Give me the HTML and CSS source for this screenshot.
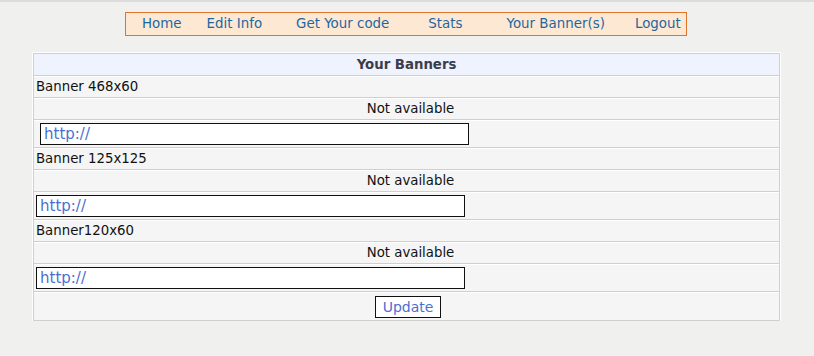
FILE: index.html
```html
<!DOCTYPE html>
<html lang="en">
<head>
    <meta charset="UTF-8">
    <title>Your Banners</title>
    <link rel="stylesheet" href="styles.css">
</head>
<body>
    <div class="top-bar"></div>

    <!-- Member menu -->
    <div class="menu">
        <a href="#" class="m-home">Home</a>
        <a href="#" class="m-edit">Edit Info</a>
        <a href="#" class="m-code">Get Your code</a>
        <a href="#" class="m-stats">Stats</a>
        <a href="#" class="m-banners">Your Banner(s)</a>
        <a href="#" class="m-logout">Logout</a>
    </div>

    <form>
        <table class="banners">
            <tr><th>Your Banners</th></tr>
            <tr><td>Banner 468x60</td></tr>
            <tr><td class="center">Not available</td></tr>
            <tr class="input-row"><td><input type="text" class="url url-first" value="http://"></td></tr>
            <tr><td>Banner 125x125</td></tr>
            <tr><td class="center">Not available</td></tr>
            <tr class="input-row"><td><input type="text" class="url" value="http://"></td></tr>
            <tr><td>Banner120x60</td></tr>
            <tr><td class="center">Not available</td></tr>
            <tr class="input-row"><td><input type="text" class="url" value="http://"></td></tr>
            <tr class="input-row"><td class="center"><button type="button" class="update">Update</button></td></tr>
        </table>
    </form>
</body>
</html>
```

FILE: styles.css
```css
* {
    box-sizing: border-box;
}

body {
    margin: 0;
    background: #f0f0ee;
    font-family: Verdana, "DejaVu Sans", sans-serif;
    font-size: 13.3px;
    color: #111;
}

.top-bar {
    height: 2px;
    background: #dcdcdc;
}

/* Menu */
.menu {
    width: 562px;
    height: 24px;
    margin: 10px 0 0 125px;
    background: #fde8d4;
    border: 1px solid #e0742c;
    display: flex;
    align-items: center;
}

.menu a {
    color: #1d67a0;
    text-decoration: none;
    white-space: nowrap;
    line-height: 22px;
    font-size: 13.4px;
}

.m-home { margin-left: 16px; }
.m-edit { margin-left: 25px; }
.m-code { margin-left: 34px; }
.m-stats { margin-left: 39px; }
.m-banners { margin-left: 44px; }
.m-logout { margin-left: 30px; }

/* Banner table */
.banners {
    width: 747px;
    margin: 17px 0 0 33px;
    border-collapse: separate;
    border-spacing: 0;
    border: 1px solid #cfcfcf;
    box-shadow: 0 0 0 1px #fff;
}

.banners th,
.banners td {
    height: 22px;
    padding: 0 2px;
    background: #f5f5f5;
    border-top: 1px solid #fff;
    border-bottom: 1px solid #cfcfcf;
    text-align: left;
    line-height: 18px;
}

.banners th {
    height: 22px;
    background: #eef3fd;
    border-top: none;
    text-align: center;
    color: #3c3c4c;
}

.banners tr:last-child td {
    border-bottom: none;
}

.banners .center {
    text-align: center;
    padding-left: 10px;
}

.banners .input-row td {
    height: 28px;
}

.url {
    display: block;
    width: 429px;
    height: 22px;
    margin: 0;
    padding: 0 3px;
    border: 1px solid #111;
    background: #fff;
    font-family: Verdana, "DejaVu Sans", sans-serif;
    font-size: 15px;
    color: #4b6fd2;
}

.url-first {
    margin-left: 4px;
}

.update {
    width: 66px;
    height: 22px;
    margin-right: 5px;
    border: 1px solid #111;
    background: #fff;
    font-family: Verdana, "DejaVu Sans", sans-serif;
    font-size: 14px;
    color: #4b6fd2;
    padding: 0;
    vertical-align: middle;
}
```
